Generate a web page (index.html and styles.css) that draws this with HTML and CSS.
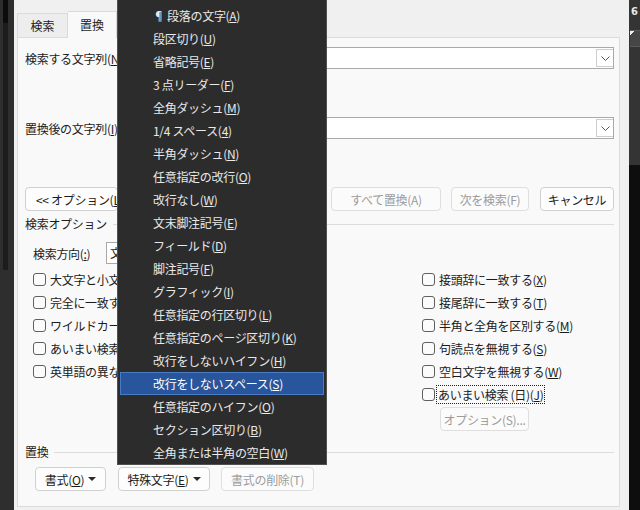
FILE: index.html
```html
<!DOCTYPE html>
<html lang="ja">

<head>
  <meta charset="UTF-8">
  <title>検索と置換</title>
  <link rel="stylesheet" href="styles.css">
</head>

<body>
  <div class="screen">
    <div class="edge-left"><span class="edge-bar"></span></div>

    <div class="dialog">
      <div class="tabs">
        <div class="tab">検索</div>
        <div class="tab tab-active">置換</div>
      </div>

      <div class="panel">
        <div class="field-row">
          <span class="field-label">検索する文字列(<u>N</u>):</span>
          <div class="combo">
            <span class="combo-btn">
              <svg width="9" height="5" viewBox="0 0 9 5"><polyline points="0.5,0.5 4.5,4.5 8.5,0.5" fill="none" stroke="#555" stroke-width="1"/></svg>
            </span>
          </div>
        </div>

        <div class="field-row field-replace">
          <span class="field-label">置換後の文字列(<u>I</u>):</span>
          <div class="combo">
            <span class="combo-btn">
              <svg width="9" height="5" viewBox="0 0 9 5"><polyline points="0.5,0.5 4.5,4.5 8.5,0.5" fill="none" stroke="#555" stroke-width="1"/></svg>
            </span>
          </div>
        </div>

        <div class="button-row">
          <button class="btn btn-more">&lt;&lt; オプション(<u>L</u>)</button>
          <button class="btn btn-off btn-all">すべて置換(A)</button>
          <button class="btn btn-off btn-next">次を検索(F)</button>
          <button class="btn btn-cancel">キャンセル</button>
        </div>

        <div class="group-title"><span>検索オプション</span><i class="group-line"></i></div>

        <div class="direction-row">
          <span>検索方向(<u>:</u>)</span>
          <div class="combo combo-small"><span class="combo-text">文書全体</span></div>
        </div>

        <div class="options">
          <div class="opt-col opt-left">
            <div class="check"><span class="box"></span>大文字と小文字を区別する(<u>H</u>)</div>
            <div class="check"><span class="box"></span>完全に一致する単語だけを検索する(<u>Y</u>)</div>
            <div class="check"><span class="box"></span>ワイルドカードを使用する(<u>U</u>)</div>
            <div class="check"><span class="box"></span>あいまい検索 (英)(<u>K</u>)</div>
            <div class="check"><span class="box"></span>英単語の異なる活用形も検索する(<u>W</u>)</div>
          </div>
          <div class="opt-col opt-right">
            <div class="check"><span class="box"></span>接頭辞に一致する(<u>X</u>)</div>
            <div class="check"><span class="box"></span>接尾辞に一致する(<u>T</u>)</div>
            <div class="check"><span class="box"></span>半角と全角を区別する(<u>M</u>)</div>
            <div class="check"><span class="box"></span>句読点を無視する(<u>S</u>)</div>
            <div class="check"><span class="box"></span>空白文字を無視する(<u>W</u>)</div>
            <div class="check"><span class="box"></span><span class="focus">あいまい検索 (日)(<u>J</u>)</span></div>
            <button class="btn btn-off btn-opt">オプション(S)...</button>
          </div>
        </div>

        <div class="group-title group-replace"><span>置換</span><i class="group-line"></i></div>

        <div class="bottom-row">
          <button class="btn btn-format">書式(<u>O</u>)<span class="tri"></span></button>
          <button class="btn btn-special">特殊文字(<u>E</u>)<span class="tri"></span></button>
          <button class="btn btn-off btn-clear">書式の削除(T)</button>
        </div>
      </div>
    </div>

    <div class="edge-right">
      <span class="edge-num">6</span>
      <span class="edge-box"></span>
    </div>

    <div class="menu">
      <div class="menu-item">¶ 段落の文字(<u>A</u>)</div>
      <div class="menu-item">段区切り(<u>U</u>)</div>
      <div class="menu-item">省略記号(<u>E</u>)</div>
      <div class="menu-item">3 点リーダー(<u>F</u>)</div>
      <div class="menu-item">全角ダッシュ(<u>M</u>)</div>
      <div class="menu-item">1/4 スペース(<u>4</u>)</div>
      <div class="menu-item">半角ダッシュ(<u>N</u>)</div>
      <div class="menu-item">任意指定の改行(<u>O</u>)</div>
      <div class="menu-item">改行なし(<u>W</u>)</div>
      <div class="menu-item">文末脚注記号(<u>E</u>)</div>
      <div class="menu-item">フィールド(<u>D</u>)</div>
      <div class="menu-item">脚注記号(<u>F</u>)</div>
      <div class="menu-item">グラフィック(<u>I</u>)</div>
      <div class="menu-item">任意指定の行区切り(<u>L</u>)</div>
      <div class="menu-item">任意指定のページ区切り(<u>K</u>)</div>
      <div class="menu-item">改行をしないハイフン(<u>H</u>)</div>
      <div class="menu-item menu-active">改行をしないスペース(<u>S</u>)</div>
      <div class="menu-item">任意指定のハイフン(<u>O</u>)</div>
      <div class="menu-item">セクション区切り(<u>B</u>)</div>
      <div class="menu-item">全角または半角の空白(<u>W</u>)</div>
    </div>
  </div>
</body>

</html>
```

FILE: styles.css
```css
body {
  margin: 0;
  padding: 0;
  font-family: "Noto Sans CJK JP", "Noto Sans", sans-serif;
  font-size: 12px;
  color: #1b1b1b;
}

.screen {
  position: relative;
  display: flex;
  width: 640px;
  height: 510px;
  overflow: hidden;
  background: #f0f0f0;
}

/* dark window edges */
.edge-left {
  width: 14px;
  background: #2e2e2e;
  flex-shrink: 0;
}

.edge-bar {
  display: block;
  width: 5px;
  height: 270px;
  margin-left: 3px;
  background: linear-gradient(#0c0c0c 0 23px, #1c1c1c 23px);
}

.edge-right {
  width: 11px;
  flex-shrink: 0;
  background: linear-gradient(#343434 0 165px, #0e0e0e 165px);
  display: flex;
  flex-direction: column;
  align-items: center;
}

.edge-num {
  color: #e8e8e8;
  font-family: "DejaVu Sans", sans-serif;
  font-size: 10px;
  font-weight: bold;
  line-height: 12px;
  margin-top: 6px;
}

.edge-box {
  width: 10px;
  height: 15px;
  margin-top: 12px;
  margin-left: 1px;
  background: linear-gradient(135deg, #f0f0f0 0 3px, #464646 3px);
  border-top: 1px solid #5a5a5a;
  border-bottom: 1px solid #5a5a5a;
}

/* dialog */
.dialog {
  width: 615px;
  flex-shrink: 0;
  background: #f0f0f0;
}

.tabs {
  display: flex;
  align-items: flex-end;
  height: 37px;
  padding-left: 3px;
}

.tab {
  width: 51px;
  height: 24px;
  box-sizing: border-box;
  border: 1px solid #dadada;
  border-bottom: 0;
  background: #ededed;
  text-align: center;
  line-height: 23px;
}

.tab-active {
  position: relative;
  z-index: 1;
  width: 49px;
  height: 27px;
  margin-bottom: -1px;
  border-left: 0;
  background: #f9f9f9;
  line-height: 26px;
}

.panel {
  width: 603px;
  height: 470px;
  margin-left: 3px;
  box-sizing: border-box;
  border: 1px solid #dcdcdc;
  background: #f9f9f9;
  padding: 9px 5px 0 7px;
  letter-spacing: -0.3px;
}

.field-row {
  display: flex;
  align-items: center;
  height: 22px;
}

.field-replace {
  margin-top: 48px;
}

/* labels run under the popup, so clip them where it starts */
.field-label {
  width: 100px;
  flex-shrink: 0;
  overflow: hidden;
  white-space: nowrap;
}

.combo {
  flex: 1;
  height: 22px;
  box-sizing: border-box;
  border: 1px solid #a9a9a9;
  background: #fff;
  display: flex;
  justify-content: flex-end;
}

.combo-btn {
  width: 17px;
  height: 18px;
  margin: 1px 0 1px 0;
  box-sizing: border-box;
  border: 1px solid #cdcdcd;
  border-right: 0;
  display: flex;
  align-items: center;
  justify-content: center;
}

.combo-small {
  flex: none;
  width: 12px;
  overflow: hidden;
  justify-content: flex-start;
}

.combo-text {
  line-height: 20px;
  padding-left: 3px;
  white-space: nowrap;
}

/* buttons */
.btn {
  height: 24px;
  box-sizing: border-box;
  border: 1px solid #d0d0d0;
  border-radius: 4px;
  background: #fdfdfd;
  font-family: inherit;
  font-size: 12px;
  letter-spacing: -0.3px;
  color: #1b1b1b;
  padding: 0;
  display: inline-flex;
  align-items: center;
  justify-content: center;
  white-space: nowrap;
}

.btn-off {
  color: #9c9c9c;
  border-color: #dedede;
  background: #fbfbfb;
}

.button-row {
  display: flex;
  margin-top: 48px;
}

.btn-more {
  width: 93px;
  overflow: hidden;
  justify-content: flex-start;
  padding-left: 10px;
}

.btn-all {
  width: 110px;
  margin-left: auto;
}

.btn-next {
  width: 78px;
  margin-left: 10px;
}

.btn-cancel {
  width: 74px;
  margin-left: 11px;
}

.group-title {
  display: flex;
  align-items: center;
  line-height: 16px;
  margin-top: 5px;
}

.group-line {
  flex: 1;
  height: 1px;
  margin-left: 6px;
  background: #dcdcdc;
}

.group-replace {
  margin-top: 13px;
}

.direction-row {
  display: flex;
  align-items: center;
  height: 22px;
  margin-top: 10px;
  padding-left: 8px;
}

.direction-row > span {
  width: 73px;
}

/* checkboxes */
.options {
  display: grid;
  grid-template-columns: 397px 1fr;
  margin-top: 4px;
}

.opt-left {
  padding-left: 8px;
}

.opt-left .check {
  width: 84px;
  overflow: hidden;
}

.check {
  display: flex;
  align-items: center;
  height: 23px;
  white-space: nowrap;
}

.box {
  width: 13px;
  height: 13px;
  box-sizing: border-box;
  border: 1px solid #5f5f5f;
  border-radius: 3px;
  background: #fbfbfb;
  margin-right: 4px;
  flex-shrink: 0;
}

.focus {
  margin-left: -2px;
  padding: 0 1px;
  line-height: 17px;
  outline: 1px dotted #222;
}

.btn-opt {
  width: 89px;
  margin: 1px 0 0 18px;
}

.bottom-row {
  display: flex;
  margin-top: 7px;
  padding-left: 10px;
}

.btn-format {
  width: 71px;
}

.btn-special {
  width: 92px;
  margin-left: 12px;
}

.btn-clear {
  width: 93px;
  margin-left: 11px;
}

.tri {
  width: 0;
  height: 0;
  margin-left: 4px;
  border-left: 4px solid transparent;
  border-right: 4px solid transparent;
  border-top: 4px solid #2a2a2a;
}

/* special characters popup */
.menu {
  position: absolute;
  left: 117px;
  top: 0;
  width: 210px;
  box-sizing: border-box;
  padding: 4px 1px 0 1px;
  background: #2c2c2c;
  border: 1px solid #505050;
  border-top: 0;
  color: #e9e9e9;
  letter-spacing: -0.3px;
}

.menu-item {
  height: 23px;
  box-sizing: border-box;
  margin: 0 1px;
  border: 1px solid transparent;
  padding-left: 32px;
  line-height: 21px;
  white-space: nowrap;
}

.menu-active {
  background: #28559b;
  border-color: #4a7cc6;
  color: #fff;
}
```
